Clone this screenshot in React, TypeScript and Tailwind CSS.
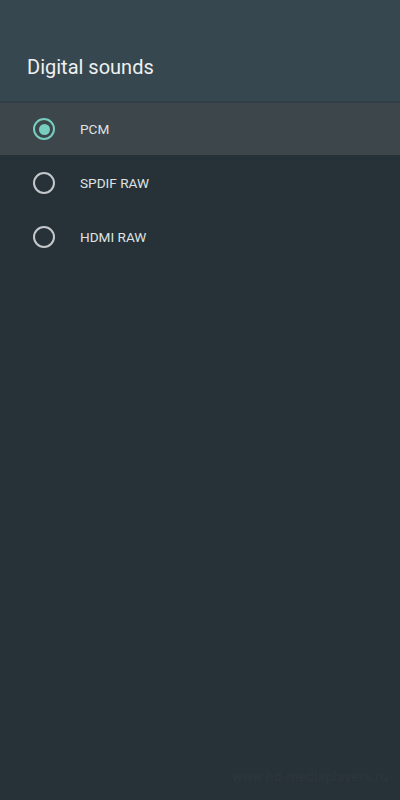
const options = ["PCM", "SPDIF RAW", "HDMI RAW"];

const Radio = ({ checked }: { checked: boolean }) => (
  <span
    className={`flex h-[22px] w-[22px] items-center justify-center rounded-full border-2 ${
      checked ? "border-[#77cdbf]" : "border-[#c4c8ca]"
    }`}
  >
    {checked && <span className="h-[11px] w-[11px] rounded-full bg-[#77cdbf]" />}
  </span>
);

export default function App() {
  return (
    <div
      className="flex h-[800px] w-[400px] flex-col bg-[#273238] text-white"
      style={{ fontFamily: "Roboto, 'Noto Sans', sans-serif" }}
    >
      <div className="flex h-[101px] items-center bg-[#37474f] px-[27px] pt-[33px]">
        <h1 className="text-[20px] font-normal text-[#eef0f1]">Digital sounds</h1>
      </div>
      <div className="h-[2px] bg-[#323f46]" />
      <ul className="flex flex-col">
        {options.map((label, i) => (
          <li
            key={label}
            className={`flex h-[52px] items-center ${i === 0 ? "bg-[#3c464b]" : ""} ${
              i === 0 ? "" : "mt-[2px]"
            }`}
          >
            <span className="ml-[33px] mr-[25px]">
              <Radio checked={i === 0} />
            </span>
            <span className="text-[13.6px] text-[#dfe2e3]">{label}</span>
          </li>
        ))}
      </ul>
      <div className="mt-auto flex justify-end pb-[13px] pr-[12px]">
        <span
          className="text-[12.5px] text-[#2e363b]"
          style={{ fontFamily: "'DejaVu Sans', sans-serif" }}
        >
          www.hd-mediaplayers.ru
        </span>
      </div>
    </div>
  );
}
